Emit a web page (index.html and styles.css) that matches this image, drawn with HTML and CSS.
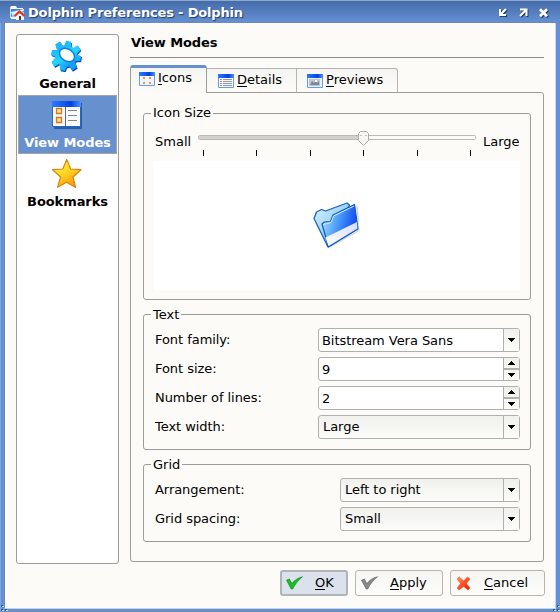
FILE: index.html
```html
<!DOCTYPE html>
<html lang="en">
<head>
<meta charset="utf-8">
<title>Dolphin Preferences - Dolphin</title>
<link rel="stylesheet" href="styles.css">
</head>
<body>
<svg class="defs" width="0" height="0" aria-hidden="true">
  <defs>
    <linearGradient id="blueBar" x1="0" x2="1"><stop offset="0" stop-color="#2b7bff"/><stop offset=".65" stop-color="#0640e0"/><stop offset="1" stop-color="#4c92ff"/></linearGradient>
    <linearGradient id="gear" x1="0" y1="0" x2="1" y2="1"><stop offset="0" stop-color="#12a5ff"/><stop offset=".5" stop-color="#28d5ff"/><stop offset="1" stop-color="#087bf0"/></linearGradient>
    <linearGradient id="star" x1="0" y1="0" x2=".6" y2="1"><stop offset="0" stop-color="#fff45a"/><stop offset=".5" stop-color="#ffdb24"/><stop offset="1" stop-color="#ff9a0a"/></linearGradient>
    <linearGradient id="folderBack" x1="0" y1="0" x2="1" y2="1"><stop offset="0" stop-color="#dcf3ff"/><stop offset="1" stop-color="#5cb2f8"/></linearGradient>
    <linearGradient id="folderFront" x1="0" y1=".3" x2="1" y2=".6"><stop offset="0" stop-color="#a5ddff"/><stop offset=".5" stop-color="#3f91f8"/><stop offset="1" stop-color="#0636f0"/></linearGradient>
    <linearGradient id="folderStrip" x1="0" y1="1" x2="1" y2="0"><stop offset="0" stop-color="#fff"/><stop offset="1" stop-color="#d9dcf5"/></linearGradient>
    <linearGradient id="cross" x1="0" y1="0" x2="1" y2="1"><stop offset="0" stop-color="#ff9c5c"/><stop offset=".5" stop-color="#ff5026"/><stop offset="1" stop-color="#f01400"/></linearGradient>
    <symbol id="arrow" viewBox="0 0 7 4"><path d="M0 0h7v1H0zM1 1h5v1H1zM2 2h3v1H2zM3 3h1v1H3z" shape-rendering="crispEdges"/></symbol>
    <symbol id="check" viewBox="0 0 17 14"><path d="M.5 4.2 3.4 3 5.800 7.600C8.800 4 12 1.800 16.500.8 12.500 4 9 8.300 6.700 13H5.200z"/></symbol>
  </defs>
</svg>
<div class="window">
  <header class="titlebar">
    <svg class="app-icon" width="16" height="16" viewBox="0 0 16 16">
      <path d="M1 3 2 1h5l1 2h6v2H2z" fill="#fff"/><path d="M1 3h1v10H1z" fill="#cfe8ff"/>
      <path d="M2 4h13v10H2z" fill="#2b86f0"/><path d="M2 13 4 7h11v7H2z" fill="#8cc8ff"/><path d="M2 7 15 4v2L3 10z" fill="#dff2ff"/><path d="M2 12h12v2H2z" fill="#fff"/>
      <path d="M7 9h8v6H7z" fill="#f4f4f4"/><path d="M5.800 11 10.500 6.500 15.300 11" fill="none" stroke="#e93418" stroke-width="2"/><path d="M10 11h2v4h-2z" fill="#444"/>
    </svg>
    <h1>Dolphin Preferences - Dolphin</h1>
    <svg class="controls" width="52" height="12" viewBox="0 0 52 12">
      <g fill="none" stroke="#fff" stroke-width="2">
        <path d="M9 2 4 7M3 2v6h6"/><path d="M23 9 29 3M23 2.500h6.500V9"/><path d="M43 2.200 50 9.200M50 2.200 43 9.200" stroke-width="2.700"/>
      </g>
    </svg>
  </header>
  <main class="content">
    <nav class="sidebar">
      <div class="page">
        <svg width="32" height="32" viewBox="0 0 32 32">
          <g transform="translate(15 16) rotate(12)">
            <g fill="#084bb8" transform="translate(1 1)"><circle r="11"/><path d="M-3-15h5l1 5h-7zM-3 15h5l1-5h-7zM-15-3v5l5 1v-7zM15-3v5l-5 1v-7zM-13-9l4-4 4 4-5 5zM13-9 9-13 5-9l5 5zM-13 9l4 4 4-4-5-5zM13 9 9 13 5 9l5-5z"/></g>
            <g fill="url(#gear)"><path d="M-3-15h5l1 5h-7zM-3 15h5l1-5h-7zM-15-3v5l5 1v-7zM15-3v5l-5 1v-7zM-13-9l4-4 4 4-5 5zM13-9 9-13 5-9l5 5zM-13 9l4 4 4-4-5-5zM13 9 9 13 5 9l5-5z"/><circle r="11"/></g>
          </g>
          <ellipse cx="16" cy="15" rx="8.200" ry="6" transform="rotate(35 16 15)" fill="#fff" stroke="#0b80db" stroke-width="1.500"/>
        </svg>
        <span>General</span>
      </div>
      <div class="page selected">
        <svg width="32" height="32" viewBox="0 0 32 32">
          <path d="M3 4h28v26H3z" fill="#245ea9"/><path d="M1.500 2.500h28v25h-28z" fill="#f8faff" stroke="#2b67bd"/><path d="M1 2h29v6H1z" fill="url(#blueBar)"/><path d="M14 8h1v19h-1z" fill="#666"/>
          <path d="M5.500 9.500h5v5h-5zM5.500 18.500h5v5h-5z" fill="#ffe0a0" stroke="#d87810" stroke-width="1.300"/>
          <path d="M17 11.500h9M17 16.500h9M17 21.500h9" stroke="#858585"/>
        </svg>
        <span>View Modes</span>
      </div>
      <div class="page">
        <svg width="32" height="32" viewBox="0 0 32 32"><path d="m15.700 1.500 4 9.500 10.300.7-8 7.300 2.600 10.500-9-5.300-9 5 3-10.200-8-7.300 10.200-.7z" fill="url(#star)" stroke="#d98212" stroke-width="1.200" stroke-linejoin="round"/></svg>
        <span>Bookmarks</span>
      </div>
    </nav>
    <section class="main">
      <h2>View Modes</h2>
      <div class="tabs">
        <div class="tab active">
          <svg width="16" height="14" viewBox="0 0 16 14"><path d="M.5.500h15v13H.5z" fill="#edf3ff" stroke="#6b9ce8"/><path d="M0 0h16v4H0z" fill="url(#blueBar)"/><path d="M4 5h2v2H4zM10 5h2v2h-2zM4 10h2v2H4zM10 10h2v2h-2z" fill="#f79422"/></svg>
          <span><u>I</u>cons</span>
        </div>
        <div class="tab">
          <svg width="16" height="14" viewBox="0 0 16 14"><path d="M.5.500h15v13H.5z" fill="#f3f6fd" stroke="#6b9ce8"/><path d="M0 0h16v4H0z" fill="url(#blueBar)"/><path d="M2 5.500h2m1 0h9M2 7.500h2m1 0h9M2 9.500h2m1 0h9M2 11.500h2m1 0h9" stroke="#999"/></svg>
          <span><u>D</u>etails</span>
        </div>
        <div class="tab last">
          <svg width="16" height="14" viewBox="0 0 16 14"><path d="M.5.500h15v13H.5z" fill="#e5eefc" stroke="#6b9ce8"/><path d="M0 0h16v4H0z" fill="url(#blueBar)"/><path d="M2 5h11v7H2z" fill="#c0c5ce"/><path d="m3 11 2-4 2 2 2-3 1 3 2-2v4z" fill="#7f8790"/><path d="M8 6h2v2H8z" fill="#fff"/></svg>
          <span><u>P</u>reviews</span>
        </div>
      </div>
      <div class="panel">
        <section class="group icon-size">
          <h3>Icon Size</h3>
          <div class="slider-row">
            <span class="small">Small</span>
            <svg width="278" height="26" viewBox="0 0 278 26">
              <rect x=".5" y="4.500" width="277" height="4" rx="1" fill="#fcfbf8" stroke="#b8b8b5"/>
              <rect x="1" y="5" width="164" height="3" fill="#d0d0cd"/>
              <path d="M162.500.500h6l2 2v7l-5 5-5-5v-7z" fill="#f6f6f4" stroke="#aaaaa7"/><path d="M162 4.500h2m3 0h2" stroke="#c4c4c0"/>
              <path d="M5.500 19v6M58.500 19v6M112.500 19v6M165.500 19v6M219.500 19v6M272.500 19v6" stroke="#000"/>
            </svg>
            <span class="large">Large</span>
          </div>
          <div class="preview">
            <svg width="48" height="48" viewBox="0 0 48 48">
              <path d="m17 46 30-17-3-25 2 3 1.500 23-29 16z" fill="#777" opacity=".35"/>
              <path d="M2 17.500 4.500 11l5-2.500 4 1.500L35 2l2.500 2L16 46z" fill="url(#folderBack)" stroke="#1763bd" stroke-width="1.300" stroke-linejoin="round"/>
              <path d="M10 23 12.500 21l6-.5L21 14 42.500 3.500 46 28 16.500 46z" fill="url(#folderFront)" stroke="#0c55c4" stroke-width="1.200" stroke-linejoin="round"/>
              <path d="M13.500 36.500 45 21l.5 6.500L16.500 45z" fill="url(#folderStrip)"/>
              <path d="M11 23.500l8-2 2.500-6.500 20.500-10" fill="none" stroke="#d8f1ff"/>
            </svg>
          </div>
        </section>
        <section class="group text">
          <h3>Text</h3>
          <div class="row"><label>Font family:</label><div class="field combo edit"><span>Bitstream Vera Sans</span><i><svg width="7" height="4"><use href="#arrow"/></svg></i></div></div>
          <div class="row"><label>Font size:</label><div class="field spin edit"><span>9</span><i><b><svg class="up" width="7" height="4"><use href="#arrow"/></svg></b><b><svg width="7" height="4"><use href="#arrow"/></svg></b></i></div></div>
          <div class="row"><label>Number of lines:</label><div class="field spin edit"><span>2</span><i><b><svg class="up" width="7" height="4"><use href="#arrow"/></svg></b><b><svg width="7" height="4"><use href="#arrow"/></svg></b></i></div></div>
          <div class="row"><label>Text width:</label><div class="field combo"><span>Large</span><i><svg width="7" height="4"><use href="#arrow"/></svg></i></div></div>
        </section>
        <section class="group grid">
          <h3>Grid</h3>
          <div class="row"><label>Arrangement:</label><div class="field combo"><span>Left to right</span><i><svg width="7" height="4"><use href="#arrow"/></svg></i></div></div>
          <div class="row"><label>Grid spacing:</label><div class="field combo"><span>Small</span><i><svg width="7" height="4"><use href="#arrow"/></svg></i></div></div>
        </section>
      </div>
      <footer class="buttons">
        <div class="button ok"><svg width="17" height="14" fill="#12c421" stroke="#087c12" stroke-width=".6"><use href="#check"/></svg><span><u>O</u>K</span></div>
        <div class="button apply"><svg width="17" height="14" fill="#898989" stroke="#555" stroke-width=".6"><use href="#check"/></svg><span><u>A</u>pply</span></div>
        <div class="button cancel"><svg width="15" height="15" viewBox="0 0 15 15"><path d="m3 .8 4.500 4L11.500 1l2.500 2-3.500 4.500L14 12l-2 2-4.500-3.500L3 14l-2-2 3.500-4.500L1 3z" fill="url(#cross)" stroke="#e0502c" stroke-width=".5"/></svg><span><u>C</u>ancel</span></div>
      </footer>
    </section>
  </main>
  <svg class="grip left" width="8" height="8"><path d="M1 1h2v2H1zM1 5h2v2H1zM5 5h2v2H5z" fill="#2c5799"/><path d="M2 2h2v1H2zM2 6h2v1H2zM6 6h2v1H6z" fill="#c5d7f2"/></svg>
  <svg class="grip right" width="8" height="8"><path d="M5 1h2v2H5zM1 5h2v2H1zM5 5h2v2H5z" fill="#2c5799"/><path d="M6 2h2v1H6zM2 6h2v1H2zM6 6h2v1H6z" fill="#c5d7f2"/></svg>
</div>
</body>
</html>
```
FILE: styles.css
```css
* { box-sizing: border-box; }
body { margin: 0; font: 13px/16px "DejaVu Sans", sans-serif; color: #000; }
h1, h2, h3 { margin: 0; font-size: inherit; }
i, b { font-style: normal; }
svg { display: block; flex: none; }
.defs { position: absolute; }
u { text-decoration: none; box-shadow: inset 0 -1px #000; }

.window {
  position: relative; width: 560px; height: 612px; padding: 0 4px 3px;
  background: #6590d3; overflow: hidden;
  box-shadow: inset 1px 0 #80a5df, inset 0 -1px #7b8ca9;
}
.titlebar {
  height: 23px; margin: 0 -4px; padding: 2px 11px 0 9px;
  display: flex; align-items: center;
  background: linear-gradient(#456ca9, #648fd2);
  border-top: 1px solid #8fa9cc; border-bottom: 1px solid #6e88b4;
}
.titlebar h1 { flex: 1; margin-left: 3px; color: #fff; letter-spacing: -.17px; text-shadow: 1px 1px 1px #243d66; white-space: nowrap; }
.app-icon { margin-top: 1px; }
.controls { filter: drop-shadow(1px 1px 0 #243d66); margin-top: 1px; }
.content {
  height: 586px; padding: 11px 11px 0; display: flex; gap: 11px;
  background: #fcfbf7; border: 1px solid #c2d4f0; border-top: 0; border-left-color: #6e88b4;
}
.sidebar { width: 103px; height: 530px; padding: 1px 1px; border: 1px solid #9c9c99; border-radius: 3px; background: #fff; }
.page { height: 59px; padding-top: 4px; display: flex; flex-direction: column; align-items: center; font-weight: bold; letter-spacing: -.08px; }
.page svg { margin-left: -2px; }
.page span { margin-top: 4px; white-space: nowrap; }
.selected { color: #fff; background: #6790cf; border: 1px solid #a5a5a5; padding-top: 3px; }

.main { width: 414px; }
h2 { height: 24px; padding: 1px 1px 0; border-bottom: 1px solid #8c8c89; font-weight: bold; letter-spacing: -.1px; }
.tabs { display: flex; align-items: flex-end; height: 35px; margin-bottom: -1px; padding-top: 7px; position: relative; }
.tab {
  display: flex; align-items: center; height: 25px; width: 90px; padding-left: 11px; gap: 3px;
  border: 1px solid #b4b4b1; border-left: 0; border-bottom-color: #9c9c99;
  background: linear-gradient(#f4f5f2, #fcfbf7);
}
.tab span { margin-top: -2px; }
.tab.active {
  height: 28px; width: 77px; padding: 0 0 4px 8px;
  border: 1px solid #9c9c99; border-top: 3px solid #6790cf; border-bottom: 0; border-radius: 3px 3px 0 0;
}
.tab.last { width: 101px; padding-left: 10px; gap: 3px; border-radius: 0 3px 0 0; }
.panel { height: 470px; padding: 20px 12px 0; border: 1px solid #9c9c99; border-radius: 0 3px 3px 3px; }
.group { border: 1px solid #9c9c99; border-radius: 3px; padding: 0 10px 0 11px; }
.group h3 { width: fit-content; margin: -9px 0 0 -4px; padding: 0 2px; font-weight: normal; background: #fcfbf7; }
.icon-size { height: 187px; margin-bottom: 14px; }
.slider-row { display: flex; margin-top: 10px; height: 26px; }
.slider-row span { margin-top: 3px; }
.slider-row .small { width: 43px; }
.slider-row .large { margin-left: 7px; }
.preview { width: 366px; height: 129px; margin: 4px 0 0 -1px; padding: 0 2px 2px 0; display: grid; place-items: center; background: #fff; }
.text { height: 136px; margin-bottom: 14px; }
.grid { height: 78px; }
.row { display: flex; justify-content: space-between; height: 24px; margin-bottom: 5px; }
.text h3, .grid h3 { margin-top: -8px; }
h3 + .row { margin-top: 5px; }
.row label { line-height: 24px; letter-spacing: -.05px; }
.field {
  display: flex; width: 202px; height: 24px; border: 1px solid #b0b0ad; border-radius: 3px;
  background: linear-gradient(#f0f0ed, #fcfcfa);
}
.grid .field { width: 180px; }
.field.edit { background: #fff; }
.field span { flex: 1; padding-left: 4px; line-height: 22px; letter-spacing: -.05px; }
.field.edit span { padding: 1px 0 0 3px; }
.field > i { width: 16px; border-left: 1px solid #b0b0ad; display: grid; place-items: center; background: linear-gradient(#f0f0ed, #fcfcfa); }
.spin > i { grid-template-rows: 12px 10px; }
.spin b { width: 15px; height: 100%; display: grid; place-items: center; }
.spin b:first-child { border-bottom: 2px solid #b0b0ad; }
.up { transform: scaleY(-1); }
.buttons { display: flex; justify-content: flex-end; gap: 7px; margin-top: 8px; }
.button {
  height: 26px; display: flex; align-items: center; padding-left: 5px;
  border: 1px solid #b6b6b3; border-radius: 3px; background: linear-gradient(#f5f5f2, #fdfdfb);
}
.ok { width: 68px; border: 2px solid #b0b3b8; background: #dce2ec; padding-left: 4px; }
.ok span { margin-left: 12px; }
.apply { width: 88px; }
.apply span { margin-left: 12px; }
.cancel { width: 95px; padding-left: 5px; margin-right: -1px; }
.cancel span { margin-left: 13px; }
.grip { position: absolute; bottom: 0; }
.left { left: 0; }
.right { right: 0; }
```
